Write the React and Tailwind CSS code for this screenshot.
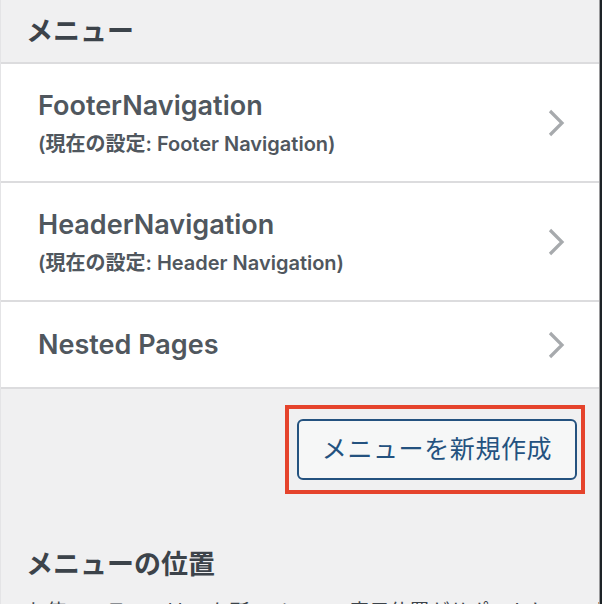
const font = { fontFamily: '"Inter", "Noto Sans CJK JP", sans-serif' };

const menus = [
  { name: "FooterNavigation", current: "Footer Navigation" },
  { name: "HeaderNavigation", current: "Header Navigation" },
  { name: "Nested Pages" },
];

const Chevron = () => (
  <svg width="20" height="30" viewBox="0 0 20 30" fill="none">
    <polyline
      points="4,3 16,15 4,27"
      stroke="#a7aaad"
      strokeWidth="3.2"
      strokeLinecap="butt"
      strokeLinejoin="miter"
    />
  </svg>
);

const MenuRow = ({ name, current }) => (
  <button
    className={`w-full flex items-center justify-between bg-white border-b-2 border-[#dcdcde] pl-[37px] pr-[33px] text-left ${
      current ? "h-[119px]" : "h-[87px]"
    }`}
  >
    <div className="flex flex-col">
      <span className="text-[27px] leading-[32px] font-semibold text-[#50575e]">
        {name}
      </span>
      {current && (
        <span className="mt-[10px] text-[20px] leading-[24px] font-semibold text-[#50575e]">
          (現在の設定: {current})
        </span>
      )}
    </div>
    <Chevron />
  </button>
);

export default function App() {
  return (
    <div className="w-[602px] h-[604px] overflow-hidden flex bg-[#f0f0f1]" style={font}>
      <div className="flex-1 min-w-0 overflow-hidden flex flex-col border-l border-[#e4e4e6]">
        {/* Section title */}
        <div className="h-[64px] shrink-0 flex items-center px-[25px] border-b-2 border-[#dcdcde]">
          <h2 className="text-[27px] font-bold text-[#3c434a] leading-none">
            メニュー
          </h2>
        </div>

        {/* Menu list */}
        <div className="flex flex-col shrink-0">
          {menus.map((m) => (
            <MenuRow key={m.name} {...m} />
          ))}
        </div>

        {/* Create button */}
        <div className="flex justify-end pt-[16px] pr-[14px] shrink-0">
          <div className="border-[4px] border-[#e5432c] pl-[8px] pr-[4px] py-[10px]">
            <button className="w-[280px] h-[61px] rounded-[6px] border-2 border-[#24527f] bg-[#f6f7f7] text-[25px] text-[#24527f] tracking-[0.6px]">
              メニューを新規作成
            </button>
          </div>
        </div>

        {/* Menu locations */}
        <div className="px-[25px] pt-[57px] shrink-0">
          <h2 className="text-[27px] font-bold text-[#3c434a] leading-none">
            メニューの位置
          </h2>
          <p className="mt-[20px] text-[20px] text-[#3c434a] leading-[28px] whitespace-nowrap">
            お使いのテーマは 2 か所のメニュー表示位置がサポートしています。
          </p>
        </div>
      </div>
      <div className="w-[1px] shrink-0 bg-[#9a9a9c]" />
      <div className="w-[2px] shrink-0 bg-[#1d2327]" />
    </div>
  );
}
